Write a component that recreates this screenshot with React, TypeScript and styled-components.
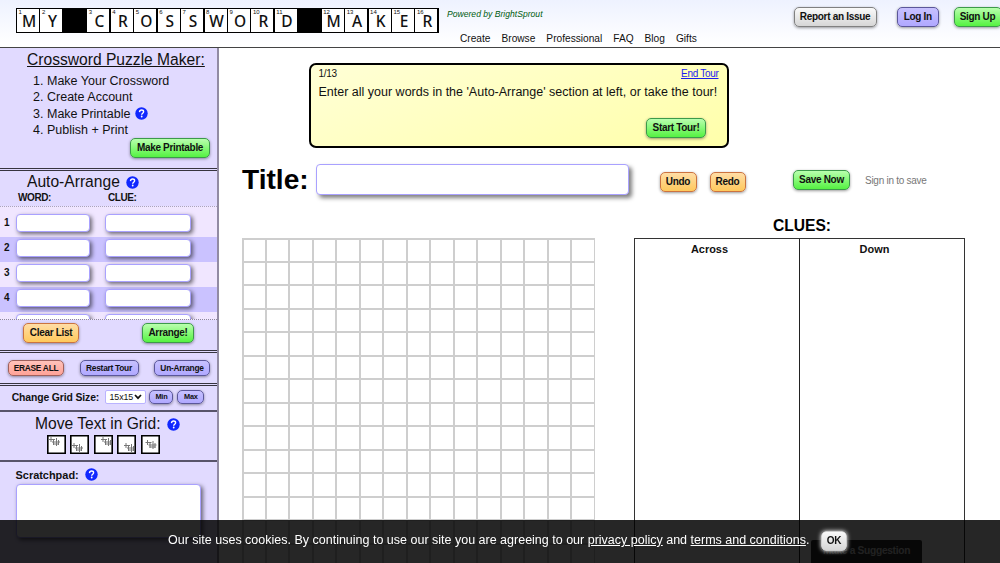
import React from "react";
import styled, { createGlobalStyle, css } from "styled-components";

const GlobalStyle = createGlobalStyle`
  * { box-sizing: border-box; }
  html, body { margin: 0; padding: 0; }
  body {
    width: 1000px;
    height: 563px;
    overflow: hidden;
    background: #fff;
    color: #111;
    font-family: "Liberation Sans", Arial, sans-serif;
  }
`;

type Tone = "green" | "orange" | "purple" | "grey" | "red";

const tones: Record<Tone, [string, string, string]> = {
  green: ["#b9ffae", "#55f242", "#3c9a4a"],
  orange: ["#ffdda6", "#ffc95c", "#cb7340"],
  purple: ["#c7c1ff", "#b0a8ff", "#5b579a"],
  grey: ["#fafafa", "#d6d6d6", "#808080"],
  red: ["#ffc2ba", "#ffa297", "#a0605c"],
};

const Button = styled.button<{ $tone: Tone; $w: number; $size?: "m" | "s" | "xs" }>`
  flex: none;
  display: flex;
  align-items: center;
  justify-content: center;
  width: ${(p) => p.$w}px;
  height: ${(p) => ({ m: 20, s: 16, xs: 14 })[p.$size ?? "m"]}px;
  padding: 0 0 1px;
  border: 1px solid ${(p) => tones[p.$tone][2]};
  border-radius: 5px;
  background: linear-gradient(${(p) => tones[p.$tone][0]}, ${(p) => tones[p.$tone][1]});
  box-shadow: 0 1px 3px rgba(0, 0, 0, 0.4);
  color: #111;
  font: bold ${(p) => ({ m: 10, s: 8.4, xs: 7.4 })[p.$size ?? "m"]}px "Liberation Sans", Arial, sans-serif;
  letter-spacing: ${(p) => ({ m: -0.31, s: -0.28, xs: -0.2 })[p.$size ?? "m"]}px;
  white-space: nowrap;
`;

const Page = styled.div`
  width: 1000px;
  height: 563px;
  overflow: hidden;
  display: flex;
  flex-direction: column;
`;

const Header = styled.header`
  flex: none;
  height: 48px;
  display: flex;
  align-items: flex-start;
  padding-left: 15.5px;
  border-bottom: 1px solid #444;
  background: linear-gradient(#eef2ff, #ffffff 95%);
`;

const Logo = styled.div`
  flex: none;
  width: 423.5px;
  height: 25px;
  margin-top: 8px;
  padding: 1px 1.5px;
  display: grid;
  grid-template-columns: repeat(18, 1fr);
  grid-template-rows: 23px;
  gap: 1.4px;
  background: #000;
`;

const LogoCell = styled.div<{ $black?: boolean }>`
  position: relative;
  height: 23px;
  background: ${(p) => (p.$black ? "#000" : "#fff")};
  text-align: center;
  font: 500 15.5px/24px "Noto Sans", "Open Sans", sans-serif;
  padding-left: 2px;
`;

const LogoNumber = styled.span`
  position: absolute;
  left: 1.5px;
  top: 0;
  font: 6px/7px "Liberation Sans", Arial, sans-serif;
`;

const HeaderMiddle = styled.div`
  flex: none;
  margin-left: 8px;
  width: 346.5px;
`;

const Powered = styled.div`
  margin-top: 8px;
  font-size: 8.6px;
  line-height: 12px;
  font-style: italic;
  color: #005c10;
`;

const Nav = styled.nav`
  display: flex;
  gap: 11px;
  margin: 13px 0 0 13px;
  font-size: 10.16px;
  line-height: 12px;
`;

const Account = styled.div`
  flex: none;
  display: flex;
  padding-top: 7px;
  & > :nth-child(2) { margin-left: 20.5px; }
  & > :nth-child(3) { margin-left: 15px; }
`;

const Body = styled.div`
  flex: 1;
  display: flex;
  min-height: 0;
`;

const Sidebar = styled.aside`
  flex: none;
  width: 219px;
  height: 515px;
  overflow: hidden;
  border-right: 2px solid #928ba3;
  background: #e1daff;
`;

const Section = styled.section<{ $h: number; $thin?: boolean }>`
  height: ${(p) => p.$h}px;
  ${(p) =>
    p.$thin
      ? css`border-bottom: 2px solid #58546a;`
      : css`border-bottom: 3px double #37343f;`}
`;

const Heading = styled.h2<{ $underline?: boolean; $left: number; $top: number }>`
  display: flex;
  align-items: center;
  gap: 6px;
  margin: 0;
  padding: ${(p) => p.$top}px 0 0 ${(p) => p.$left}px;
  font-size: 15.625px;
  font-weight: normal;
  line-height: 18px;
  white-space: nowrap;
  text-decoration: ${(p) => (p.$underline ? "underline" : "none")};
`;

const Steps = styled.ol`
  margin: 4px 0 0 30px;
  padding: 0;
  list-style: none;
  font-size: 12.5px;
`;

const Step = styled.li<{ $h: number }>`
  display: flex;
  align-items: center;
  height: ${(p) => p.$h}px;
`;

const StepNumber = styled.span`
  width: 17px;
  padding-right: 3.5px;
  text-align: right;
`;

const StepHelp = styled.div`
  margin-left: 5px;
  display: flex;
`;

const Columns = styled.div`
  display: flex;
  height: 15px;
  padding: 1px 0 0 18px;
  font-size: 10px;
  letter-spacing: -0.4px;
  line-height: 12px;
  font-weight: bold;
  & > :first-child { width: 90px; }
`;

const WordList = styled.div`
  height: 114px;
  overflow: hidden;
  padding-top: 5px;
  background: #f0e6ff;
  border-top: 1px dotted #aaa4bd;
  border-bottom: 1px dotted #8c879d;
`;

const WordRow = styled.div<{ $dark: boolean }>`
  height: 25px;
  display: flex;
  align-items: flex-start;
  padding: 2px 0 0 4px;
  background: ${(p) => (p.$dark ? "#cac2ff" : "#f0e6ff")};
  b { width: 11.5px; font-size: 10px; line-height: 18px; }
`;

const field = css`
  border: 1px solid #a9a1ff;
  border-radius: 4px;
  background: #fff;
  box-shadow: 2px 2px 4px rgba(0, 0, 0, 0.55);
  outline: 0;
  padding: 0 4px;
`;

const WordInput = styled.input<{ $w: number }>`
  ${field}
  width: ${(p) => p.$w}px;
  height: 18px;
  margin-right: 15.3px;
`;

const ButtonRow = styled.div<{ $top: number; $left: number; $gap: number }>`
  display: flex;
  align-items: center;
  gap: ${(p) => p.$gap}px;
  padding: ${(p) => p.$top}px 0 0 ${(p) => p.$left}px;
`;

const SizeLabel = styled.b`
  width: 89px;
  font-size: 10.4px;
  letter-spacing: -0.12px;
  white-space: nowrap;
`;

const SizeSelect = styled.div`
  width: 41px;
  height: 14px;
  display: flex;
  align-items: center;
  justify-content: space-between;
  padding: 0 3px 0 4px;
  border: 1px solid #bab3ff;
  border-radius: 2px;
  background: #fff;
  font-size: 8.9px;
  letter-spacing: -0.15px;
`;

const MoveRow = styled.div`
  display: flex;
  gap: 4.4px;
  padding: 2px 0 0 47px;
`;

const MoveBox = styled.button`
  width: 19px;
  height: 19px;
  padding: 0;
  border: 1px solid #000;
  box-shadow: inset 0 0 0 0.6px #000;
  background: #fff;
  display: flex;
`;

const ScratchLabel = styled.div`
  display: flex;
  align-items: center;
  gap: 6px;
  padding: 6px 0 0 15.5px;
  font-size: 10.94px;
  line-height: 12px;
  font-weight: bold;
`;

const ScratchArea = styled.textarea`
  ${field}
  display: block;
  width: 185px;
  height: 54px;
  margin: 3px 0 0 16px;
  resize: none;
`;

const Main = styled.main`
  flex: 1;
  padding: 15px 0 0 23px;
`;

const Tour = styled.section`
  width: 420.5px;
  height: 85px;
  margin-left: 66.5px;
  padding: 3px 8.5px 0 8px;
  border: 2.4px solid #000;
  border-radius: 7px;
  background: linear-gradient(160deg, #ffffd6, #ffffaa);
`;

const TourTop = styled.div`
  display: flex;
  justify-content: space-between;
  font-size: 10px;
  letter-spacing: -0.3px;
  line-height: 11px;
  a { color: #1c1cf0; text-decoration: underline; }
`;

const TourText = styled.p`
  margin: 5px 0 0;
  font-size: 12.5px;
  line-height: 17px;
  white-space: nowrap;
`;

const TourAction = styled.div`
  display: flex;
  justify-content: flex-end;
  padding: 17px 12.5px 0 0;
`;

const TitleRow = styled.div`
  display: flex;
  height: 32px;
  margin-top: 16px;
`;

const TitleLabel = styled.label`
  width: 74px;
  font-size: 28.125px;
  line-height: 32px;
  font-weight: bold;
  color: #000;
`;

const TitleInput = styled.input`
  ${field}
  width: 313px;
  height: 31px;
  box-shadow: 3px 3px 4px rgba(0, 0, 0, 0.5);
`;

const EditButtons = styled.div`
  display: flex;
  gap: 13px;
  margin: 8px 0 0 30.5px;
`;

const SaveGroup = styled.div`
  display: flex;
  align-items: center;
  height: 20px;
  gap: 15px;
  margin: 6px 0 0 47.5px;
  font-size: 10px;
  letter-spacing: -0.27px;
  color: #777;
`;

const Workspace = styled.div`
  display: flex;
  align-items: flex-start;
`;

const Board = styled.div`
  flex: none;
  width: 353px;
  height: 353px;
  margin-top: 42px;
  padding: 1.5px;
  display: grid;
  grid-template-columns: repeat(15, 1fr);
  grid-template-rows: repeat(15, 1fr);
  gap: 2px;
  background: #cecece;
`;

const BoardCell = styled.div`
  background: #fff;
`;

const Clues = styled.section`
  width: 331px;
  margin: 21px 0 0 39px;
`;

const CluesTitle = styled.h2`
  height: 21px;
  margin: 0;
  padding-left: 5px;
  font-size: 15.625px;
  line-height: 18px;
  text-align: center;
  color: #000;
`;

const ClueColumns = styled.div`
  display: grid;
  grid-template-columns: 164px 165px;
  height: 340px;
  border: 1px solid #333;
  border-bottom: 0;
`;

const ClueColumn = styled.div`
  padding: 4px 15px 0 0;
  font-size: 10.94px;
  line-height: 13px;
  font-weight: bold;
  text-align: center;
  & + & { border-left: 1px solid #222; }
`;

const Suggestion = styled.div`
  position: fixed;
  left: 811px;
  bottom: 0;
  width: 111px;
  height: 23px;
  border-radius: 2px 2px 0 0;
  background: #333;
  color: #ddd;
  font-size: 10.2px;
  letter-spacing: -0.3px;
  line-height: 22px;
  font-weight: bold;
  text-align: center;
`;

const CookieBar = styled.div`
  position: fixed;
  left: 0;
  right: 0;
  bottom: 0;
  height: 43px;
  display: flex;
  padding: 11px 0 0 168px;
  background: rgba(0, 0, 0, 0.85);
  color: #fff;
  font-size: 12.5px;
  line-height: 18px;
  white-space: nowrap;
  p { width: 653px; margin: 0; }
  a { text-decoration: underline; }
`;

const OkButton = styled(Button)`
  border-color: #ccc;
  box-shadow: 0 0 4px #fff;
`;

const Help = () => (
  <svg width="13" height="13" viewBox="0 0 13 13" role="img" aria-label="Help">
    <circle cx="6.5" cy="6.5" r="6.2" fill="#1128ff" />
    <path d="M4.5 5.1C4.6 3.7 5.4 3 6.6 3s2 .7 2 1.7c0 1.5-1.9 1.5-1.9 3" fill="none" stroke="#fff" strokeWidth="1.4" />
    <circle cx="6.7" cy="9.5" r=".9" fill="#fff" />
  </svg>
);

const Mini = ({ x, y }: { x: number; y: number }) => (
  <svg width="17" height="17" viewBox="0 0 17 17">
    <g transform={`translate(${x} ${y})`} fill="none" stroke="#777" strokeWidth="1">
      <path d="M0 2.5h6M2 0v5M4.5 2v6M7.5 1v8M9.5 3v5M3 5h8M4 7h6" />
    </g>
  </svg>
);

const positions: [number, number][] = [[1, 1], [1, 7], [6, 1], [6, 7], [3.5, 4]];

const logoText = "MY CROSSWORD MAKER";

const logoCells = logoText.split("").map((letter, i) => ({
  letter,
  number: logoText.slice(0, i + 1).replace(/ /g, "").length,
}));

const steps: [string, number][] = [
  ["Make Your Crossword", 16],
  ["Create Account", 16],
  ["Make Printable", 17],
  ["Publish + Print", 16],
];

export default function App() {
  return (
    <Page>
      <GlobalStyle />
      <Header>
        <Logo>
          {logoCells.map(({ letter, number }, i) => (
            <LogoCell key={i} $black={letter === " "}>
              {letter !== " " && <LogoNumber>{number}</LogoNumber>}
              {letter}
            </LogoCell>
          ))}
        </Logo>
        <HeaderMiddle>
          <Powered>Powered by BrightSprout</Powered>
          <Nav>
            {["Create", "Browse", "Professional", "FAQ", "Blog", "Gifts"].map((t) => (
              <span key={t}>{t}</span>
            ))}
          </Nav>
        </HeaderMiddle>
        <Account>
          <Button $tone="grey" $w={83}>Report an Issue</Button>
          <Button $tone="purple" $w={41.5}>Log In</Button>
          <Button $tone="green" $w={48}>Sign Up</Button>
        </Account>
      </Header>
      <Body>
        <Sidebar>
          <Section $h={123}>
            <Heading $underline $left={27} $top={3}>Crossword Puzzle Maker:</Heading>
            <Steps>
              {steps.map(([text, h], i) => (
                <Step key={text} $h={h}>
                  <StepNumber>{i + 1}.</StepNumber>
                  {text}
                  {i === 2 && <StepHelp><Help /></StepHelp>}
                </Step>
              ))}
            </Steps>
            <ButtonRow $top={0} $left={130} $gap={0}>
              <Button $tone="green" $w={80}>Make Printable</Button>
            </ButtonRow>
          </Section>
          <Section $h={182}>
            <Heading $left={27} $top={2}>Auto-Arrange <Help /></Heading>
            <Columns>
              <span>WORD:</span>
              <span>CLUE:</span>
            </Columns>
            <WordList>
              {[1, 2, 3, 4, 5].map((n) => (
                <WordRow key={n} $dark={n % 2 === 0}>
                  <b>{n < 5 ? n : ""}</b>
                  <WordInput $w={74.5} />
                  <WordInput $w={86} />
                </WordRow>
              ))}
            </WordList>
            <ButtonRow $top={3} $left={23} $gap={63}>
              <Button $tone="orange" $w={56}>Clear List</Button>
              <Button $tone="green" $w={52}>Arrange!</Button>
            </ButtonRow>
          </Section>
          <Section $h={33}>
            <ButtonRow $top={7} $left={8} $gap={15.5}>
              <Button $tone="red" $w={56} $size="s">ERASE ALL</Button>
              <Button $tone="purple" $w={59} $size="s">Restart Tour</Button>
              <Button $tone="purple" $w={56} $size="s">Un-Arrange</Button>
            </ButtonRow>
          </Section>
          <Section $h={26} $thin>
            <ButtonRow $top={4} $left={11.7} $gap={3.9}>
              <SizeLabel>Change Grid Size:</SizeLabel>
              <SizeSelect>
                15x15
                <svg width="8" height="6" viewBox="0 0 8 6">
                  <path d="M1 1l3 3.2L7 1" fill="none" stroke="#111" strokeWidth="1.7" />
                </svg>
              </SizeSelect>
              <Button $tone="purple" $w={24} $size="xs">Min</Button>
              <Button $tone="purple" $w={27} $size="xs">Max</Button>
            </ButtonRow>
          </Section>
          <Section $h={50} $thin>
            <Heading $left={35} $top={3}>Move Text in Grid: <Help /></Heading>
            <MoveRow>
              {positions.map(([x, y], i) => (
                <MoveBox key={i}><Mini x={x} y={y} /></MoveBox>
              ))}
            </MoveRow>
          </Section>
          <ScratchLabel>Scratchpad: <Help /></ScratchLabel>
          <ScratchArea />
        </Sidebar>
        <Main>
          <Tour>
            <TourTop>
              <span>1/13</span>
              <a>End Tour</a>
            </TourTop>
            <TourText>Enter all your words in the 'Auto-Arrange' section at left, or take the tour!</TourText>
            <TourAction>
              <Button $tone="green" $w={60}>Start Tour!</Button>
            </TourAction>
          </Tour>
          <TitleRow>
            <TitleLabel>Title:</TitleLabel>
            <TitleInput />
            <EditButtons>
              <Button $tone="orange" $w={37}>Undo</Button>
              <Button $tone="orange" $w={36}>Redo</Button>
            </EditButtons>
            <SaveGroup>
              <Button $tone="green" $w={57}>Save Now</Button>
              Sign in to save
            </SaveGroup>
          </TitleRow>
          <Workspace>
            <Board>
              {Array.from({ length: 225 }, (_, i) => (
                <BoardCell key={i} />
              ))}
            </Board>
            <Clues>
              <CluesTitle>CLUES:</CluesTitle>
              <ClueColumns>
                <ClueColumn>Across</ClueColumn>
                <ClueColumn>Down</ClueColumn>
              </ClueColumns>
            </Clues>
          </Workspace>
        </Main>
      </Body>
      <Suggestion>Make a Suggestion</Suggestion>
      <CookieBar>
        <p>
          Our site uses cookies. By continuing to use our site you are agreeing to our <a>privacy policy</a> and{" "}
          <a>terms and conditions</a>.
        </p>
        <OkButton $tone="grey" $w={26}>OK</OkButton>
      </CookieBar>
    </Page>
  );
}
